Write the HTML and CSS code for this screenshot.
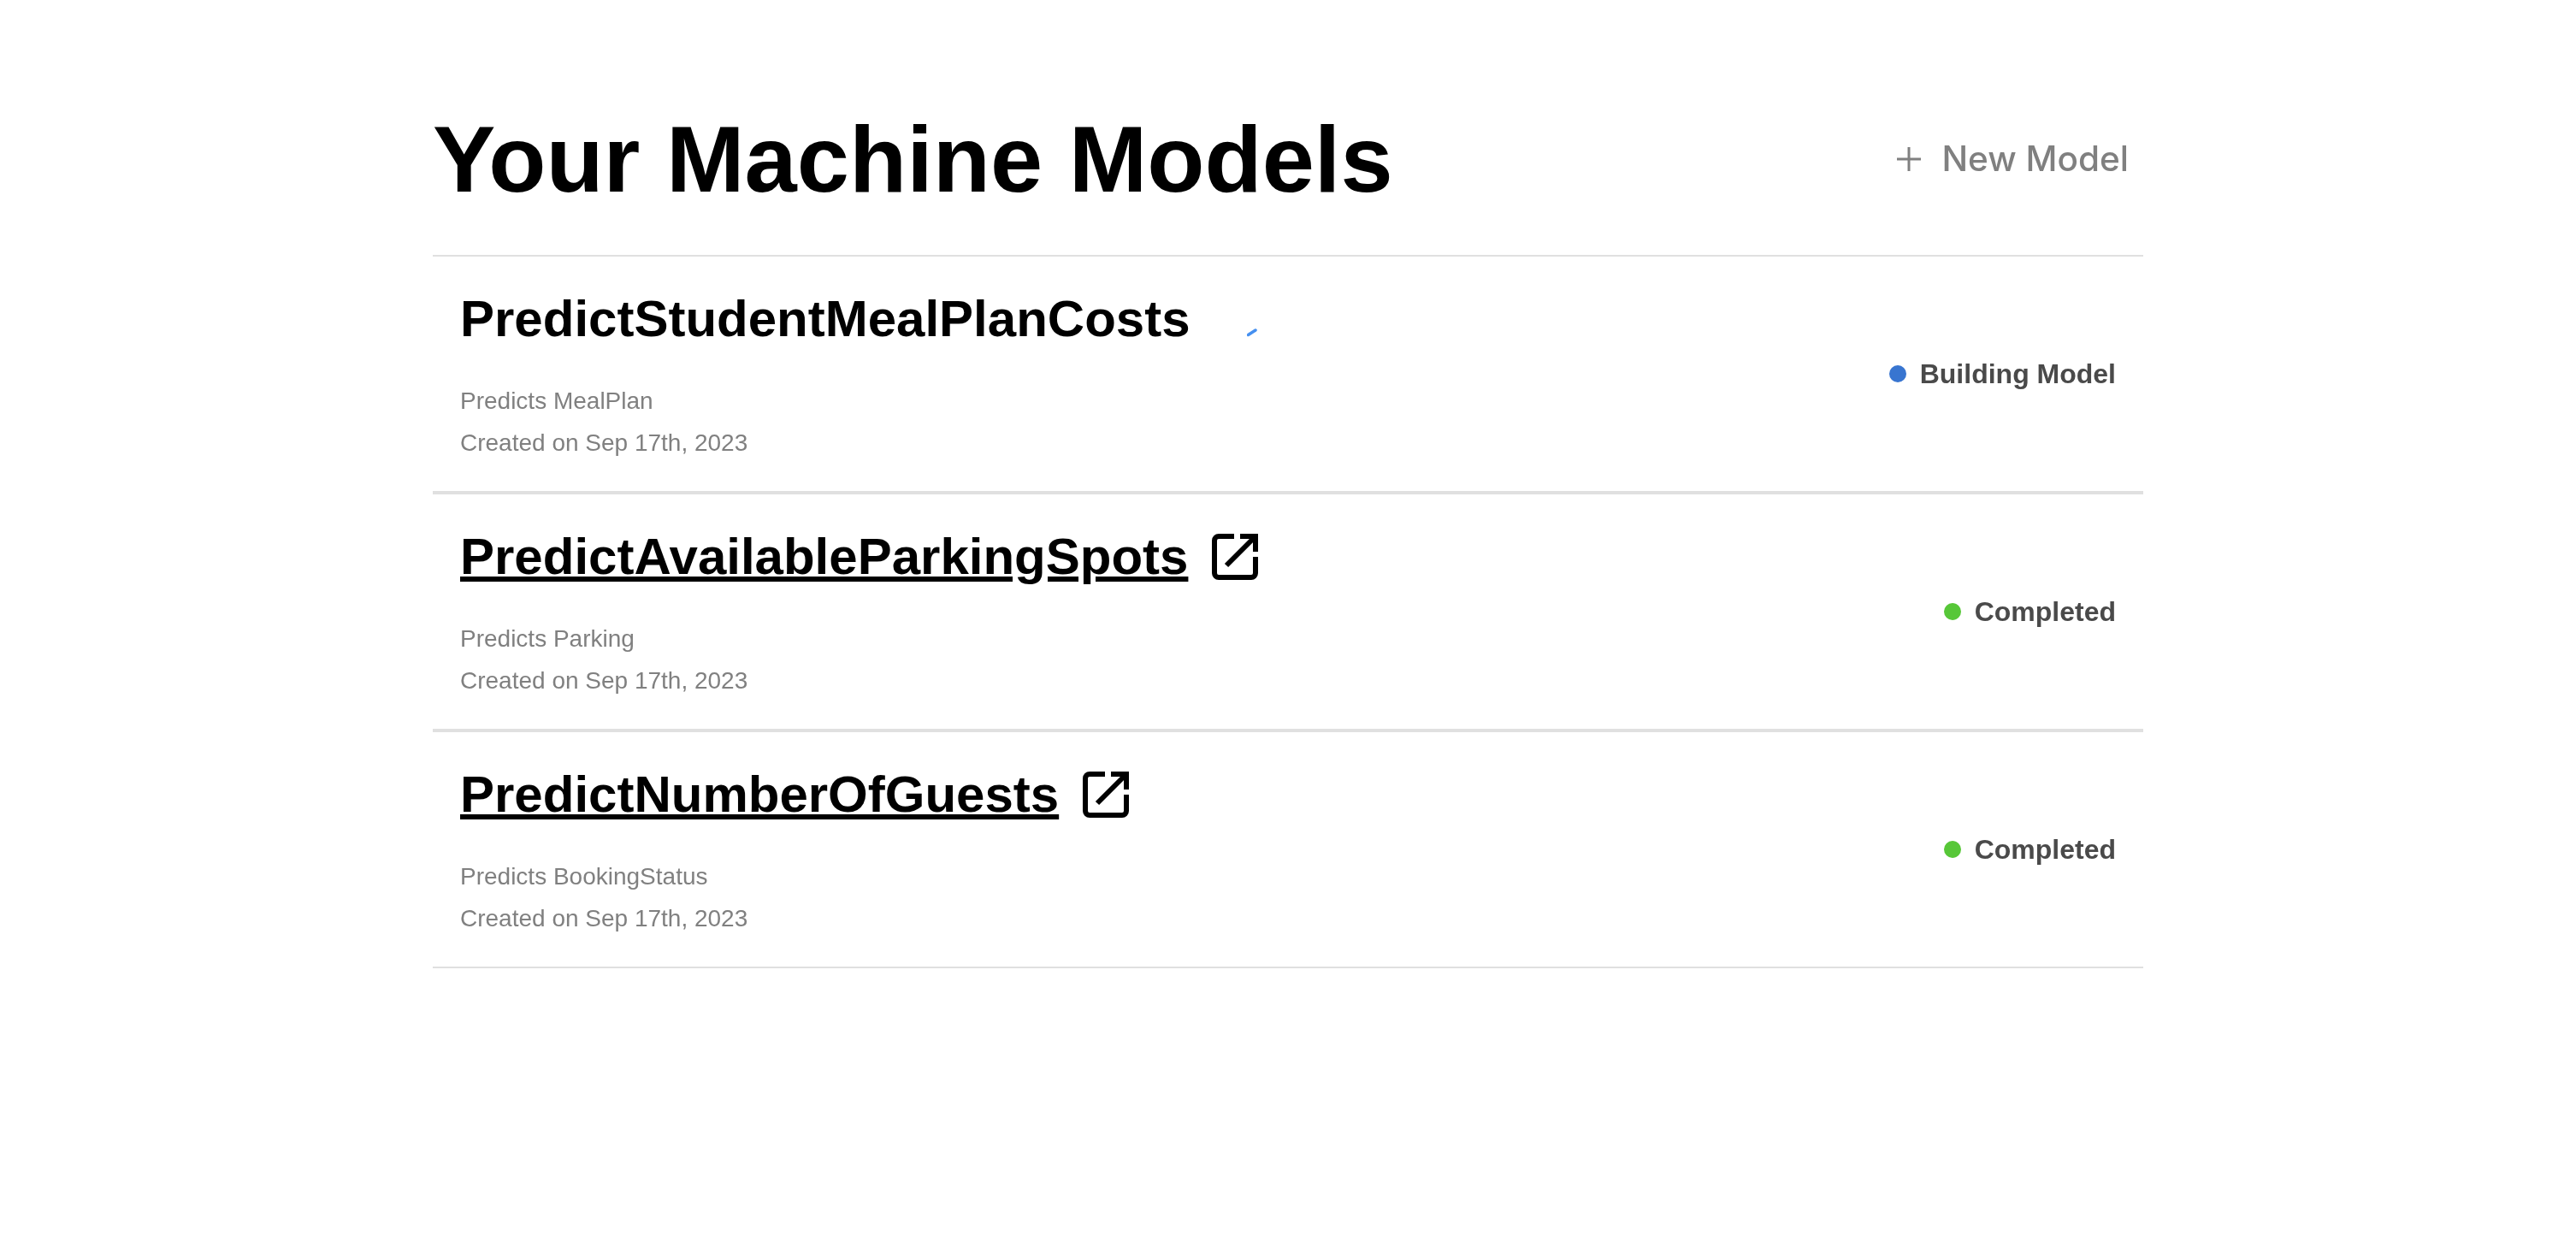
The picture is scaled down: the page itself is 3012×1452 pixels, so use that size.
FILE: index.html
```html
<!DOCTYPE html>
<html lang="en">
<head>
    <meta charset="UTF-8">
    <title>Your Machine Models</title>
    <link rel="stylesheet" href="styles.css">
</head>
<body>
    <div class="container">
        <div class="header">
            <h1>Your Machine Models</h1>
            <a class="new-model" href="#">
                <svg class="plus" viewBox="0 0 30 30"><path d="M15 1v28M1 15h28"/></svg>
                <span>New Model</span>
            </a>
        </div>
        <div class="model">
            <div class="info">
                <div class="name">
                    <h2>PredictStudentMealPlanCosts</h2>
                    <svg class="spinner" viewBox="0 0 12 10"><path d="M1.5 7.5L10 2"/></svg>
                </div>
                <p>Predicts MealPlan</p>
                <p>Created on Sep 17th, 2023</p>
            </div>
            <div class="status"><span class="dot building"></span>Building Model</div>
        </div>
        <div class="model">
            <div class="info">
                <div class="name">
                    <h2><a href="#">PredictAvailableParkingSpots</a></h2>
                    <svg class="open" viewBox="0 0 54 54"><path d="M26 3H8a5 5 0 0 0-5 5v38a5 5 0 0 0 5 5h38a5 5 0 0 0 5-5V27M33 3h18v18M51 3L17 37"/></svg>
                </div>
                <p>Predicts Parking</p>
                <p>Created on Sep 17th, 2023</p>
            </div>
            <div class="status"><span class="dot done"></span>Completed</div>
        </div>
        <div class="model">
            <div class="info">
                <div class="name">
                    <h2><a href="#">PredictNumberOfGuests</a></h2>
                    <svg class="open" viewBox="0 0 54 54"><path d="M26 3H8a5 5 0 0 0-5 5v38a5 5 0 0 0 5 5h38a5 5 0 0 0 5-5V27M33 3h18v18M51 3L17 37"/></svg>
                </div>
                <p>Predicts BookingStatus</p>
                <p>Created on Sep 17th, 2023</p>
            </div>
            <div class="status"><span class="dot done"></span>Completed</div>
        </div>
    </div>
</body>
</html>
```
FILE: styles.css
```css
body {
    margin: 0;
    background-color: white;
    font-family: "Liberation Sans", Arial, sans-serif;
}
.container {
    width: 2000px;
    margin-left: 506px;
    padding-top: 83px;
    will-change: transform;
}
.header {
    display: flex;
    justify-content: space-between;
    align-items: center;
    height: 215px;
}
h1 {
    margin: 0 0 10px;
    font-size: 110px;
    line-height: 148px;
    color: black;
}
.new-model {
    display: flex;
    align-items: center;
    gap: 23px;
    margin: 0 17px 10px 0;
    color: #808080;
    font-family: Inter, sans-serif;
    font-size: 40.5px;
    font-weight: 500;
    text-decoration: none;
}
.plus {
    width: 30px;
    height: 30px;
    fill: none;
    stroke: #808080;
    stroke-width: 3;
}
.model {
    display: flex;
    justify-content: space-between;
    align-items: center;
    height: 274px;
    padding: 0 32px;
    border-top: 2px solid #e0e0e0;
    border-bottom: 2px solid #e0e0e0;
}
.info {
    padding-top: 3px;
}
.name {
    display: flex;
    align-items: center;
    gap: 28px;
    height: 76px;
    margin-bottom: 33px;
}
h2 {
    margin: 0;
    font-size: 60px;
    line-height: 76px;
    color: black;
}
h2 a {
    color: black;
}
.info p {
    margin: 0;
    font-size: 28px;
    line-height: 49px;
    color: #808080;
}
.open {
    width: 54px;
    height: 54px;
    fill: none;
    stroke: black;
    stroke-width: 6;
}
.spinner {
    width: 12px;
    height: 10px;
    margin: 32px 0 0 38px;
    stroke: #4590f0;
    stroke-width: 3.5;
    stroke-linecap: round;
}
.status {
    display: flex;
    align-items: center;
    gap: 16px;
    font-size: 32px;
    font-weight: bold;
    color: #4a4a4a;
}
.dot {
    width: 20px;
    height: 20px;
    border-radius: 50%;
}
.building {
    background-color: #3875d0;
}
.done {
    background-color: #57c738;
}
```
